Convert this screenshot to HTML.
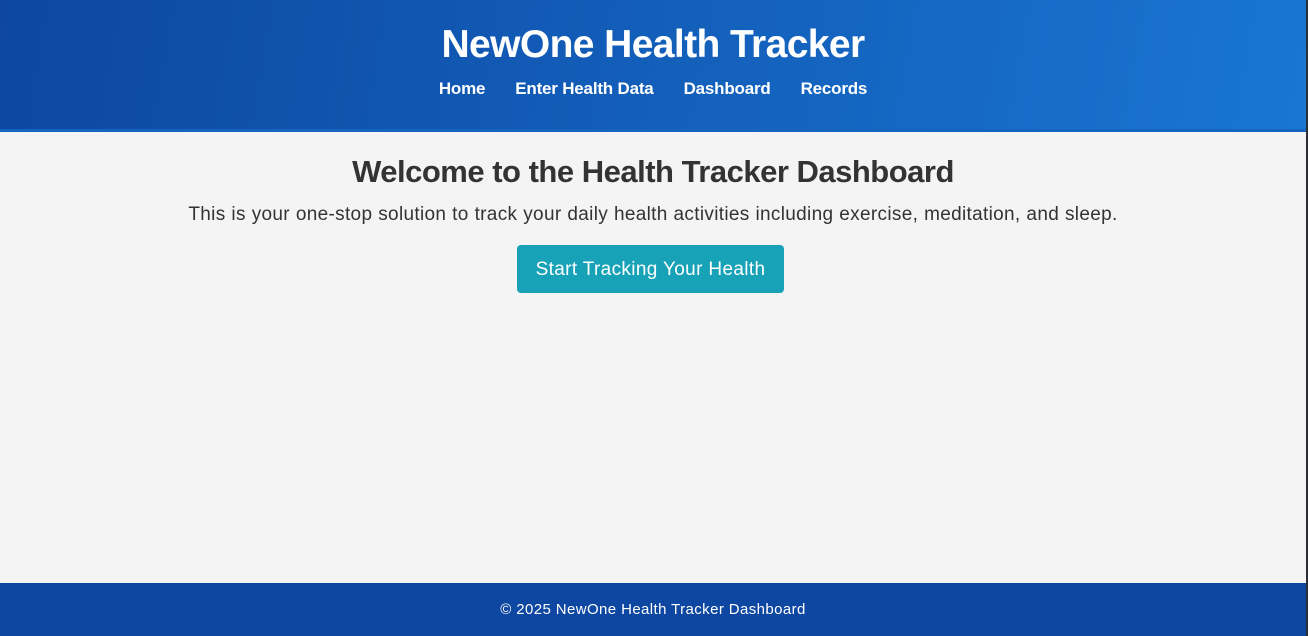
<!DOCTYPE html>
<html><head><style>
html,body{margin:0;padding:0;width:1308px;height:636px;overflow:hidden;background:#2a2f36;font-family:"Liberation Sans",Roboto,sans-serif}
.wrap{width:1306px;height:636px;background:#f4f4f4;position:relative}
header{height:129px;background:linear-gradient(100deg,#0d47a1,#1976d2);border-bottom:3px solid #1565c0;color:#fff;text-align:center}
h1{margin:0;padding-top:22px;font-size:39px;line-height:46px;font-weight:bold;letter-spacing:-0.6px}
nav{margin-top:11px;font-size:17px;font-weight:bold;letter-spacing:-0.2px}
nav span{margin:0 15px}
h2{margin:0;padding-top:21px;text-align:center;font-size:31px;line-height:38px;color:#333;font-weight:bold;letter-spacing:-0.5px}
p{margin:13px 0 0;text-align:center;font-size:19px;color:#333;letter-spacing:0.32px;word-spacing:0.3px}
.btn{position:absolute;left:517px;top:245px;width:267px;height:48px;background:#17a2b8;color:#fff;border-radius:4px;font-size:19px;line-height:50px;text-align:center;letter-spacing:0.35px}
footer{position:absolute;left:0;top:583px;width:1306px;height:53px;background:#0d47a1;color:#fff;text-align:center;font-size:15px;line-height:54px;letter-spacing:0.4px}
</style></head><body><div class="wrap">
<header><h1>NewOne Health Tracker</h1><nav><span>Home</span><span>Enter Health Data</span><span>Dashboard</span><span>Records</span></nav></header>
<h2>Welcome to the Health Tracker Dashboard</h2>
<p>This is your one-stop solution to track your daily health activities including exercise, meditation, and sleep.</p>
<div class="btn">Start Tracking Your Health</div>
<footer>© 2025 NewOne Health Tracker Dashboard</footer>
</div></body></html>
